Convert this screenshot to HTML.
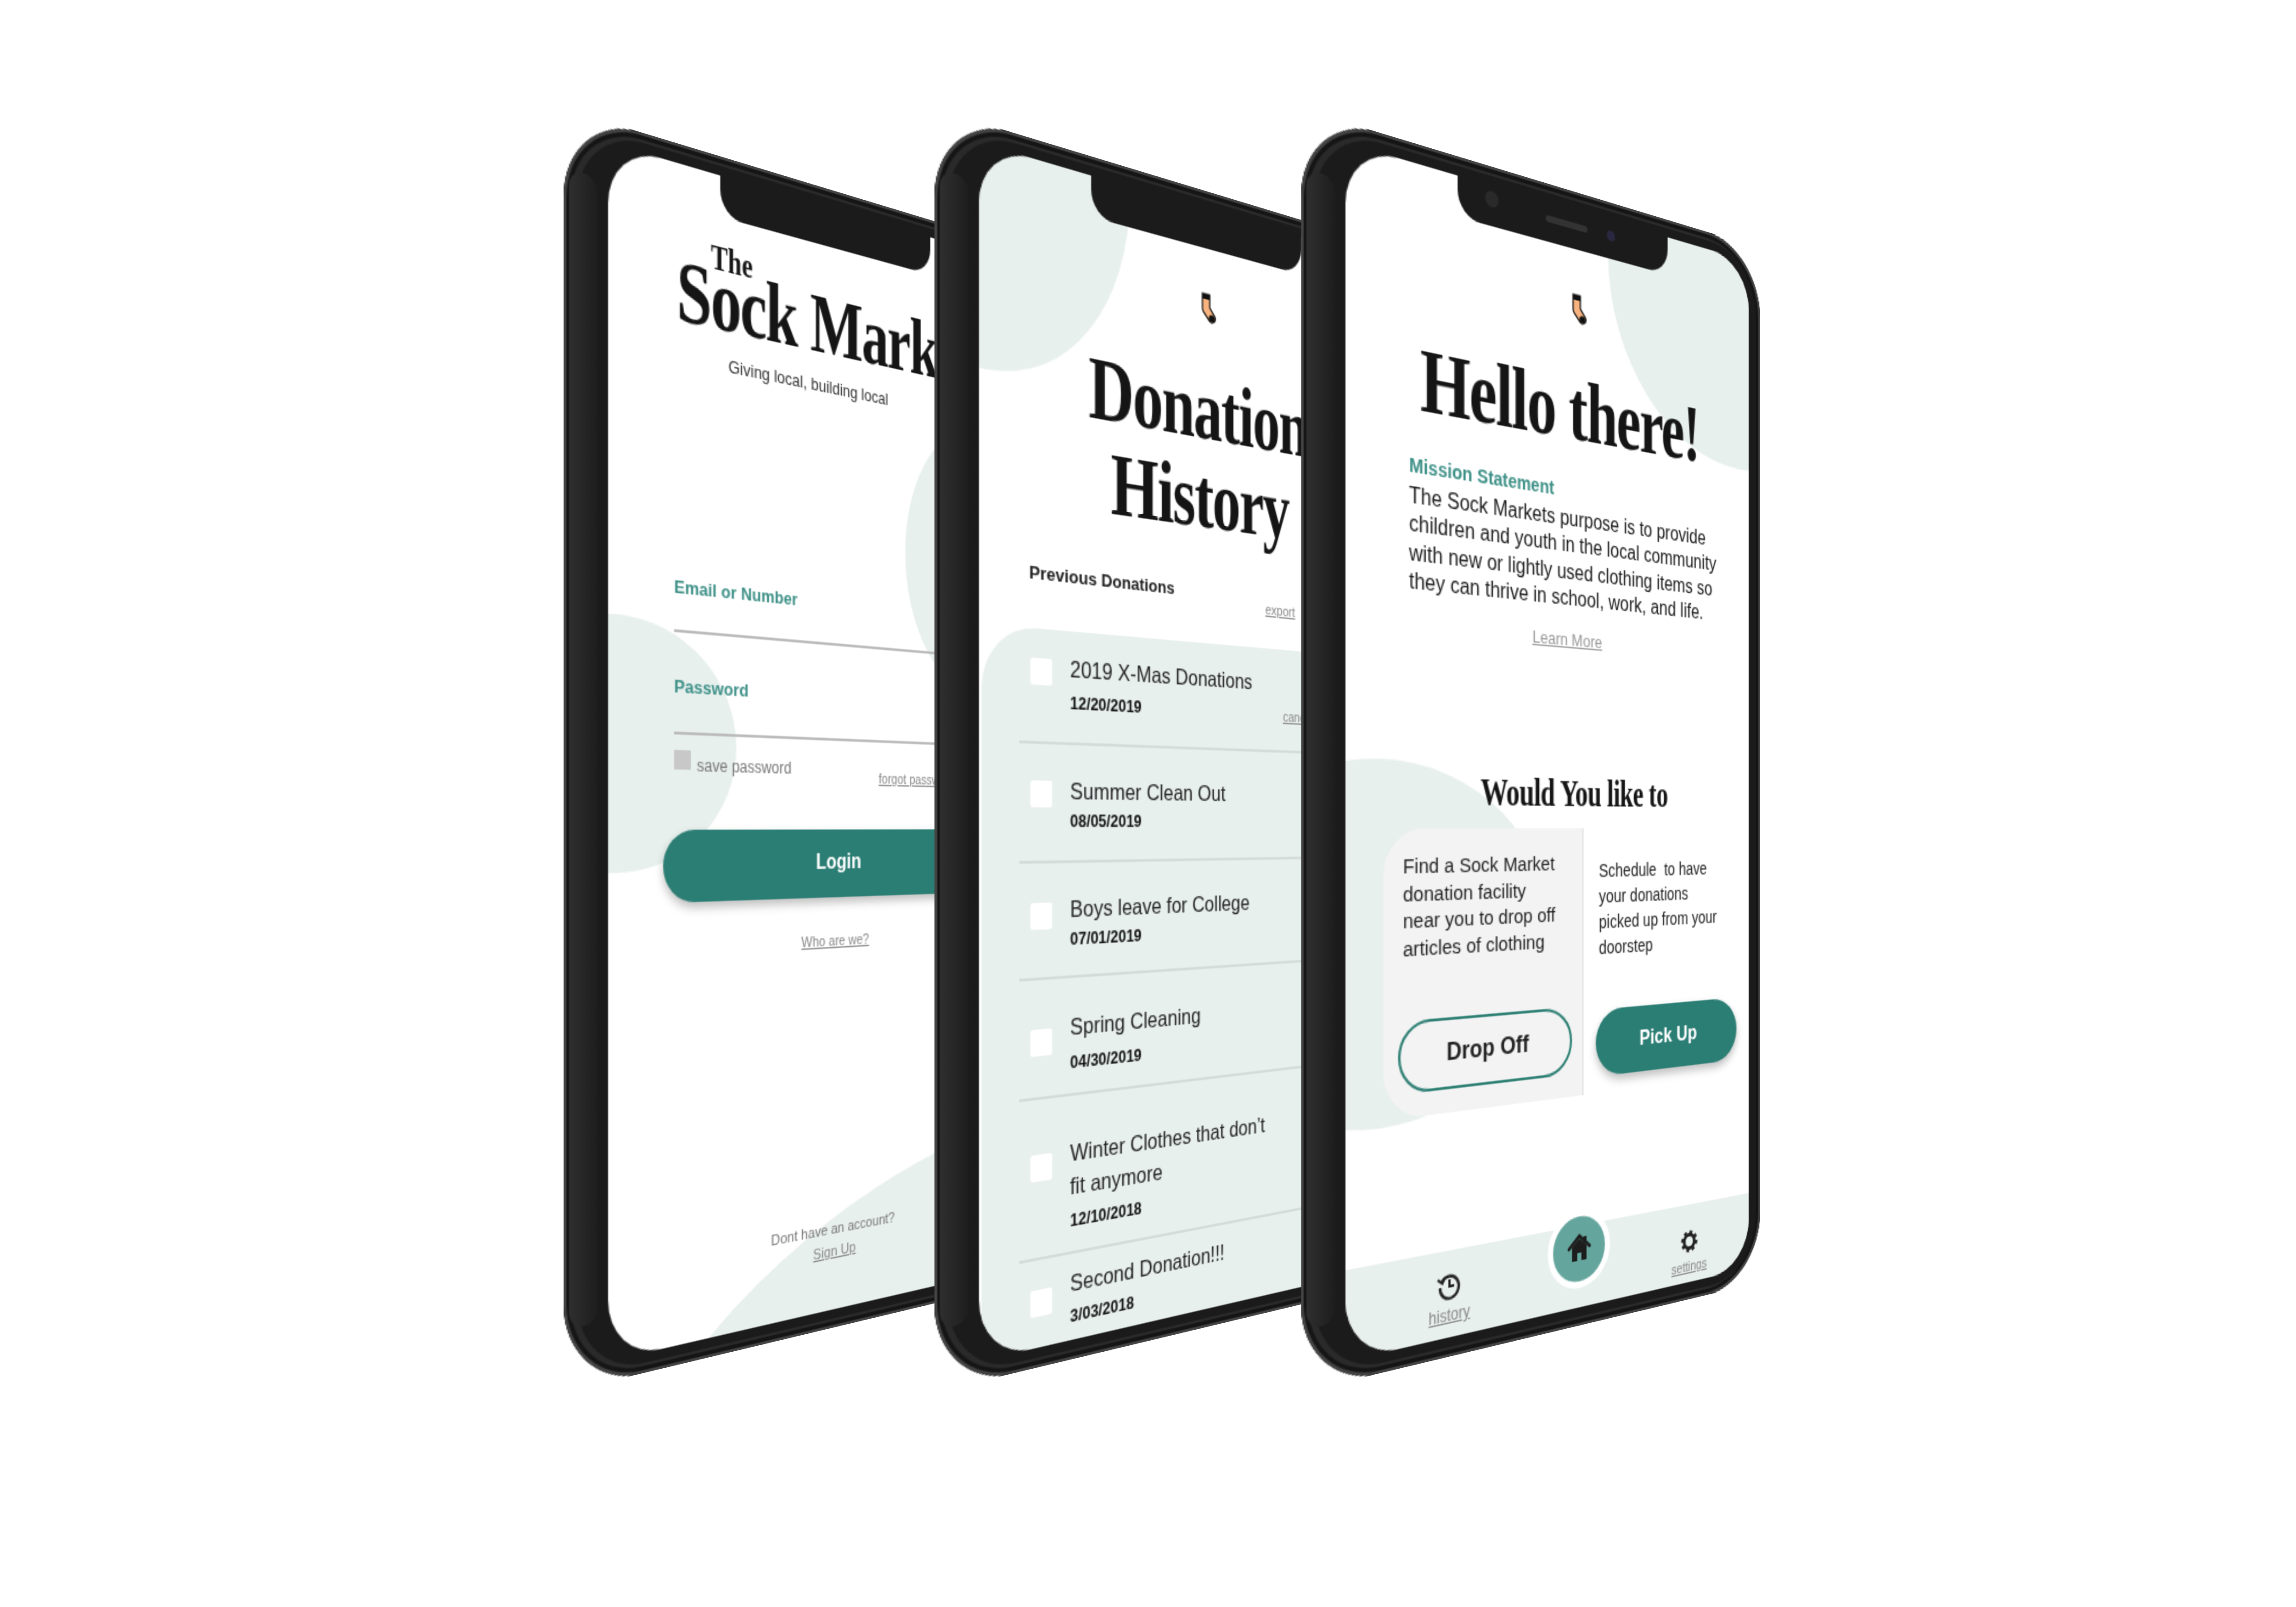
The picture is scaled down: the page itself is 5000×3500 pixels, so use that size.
<!DOCTYPE html>
<html><head><meta charset="utf-8"><style>
html,body{margin:0;padding:0;background:#fff;width:5000px;height:3500px;overflow:hidden}
#s{position:absolute;left:0;top:0;width:1560px;height:1092px;transform:scale(3.2051);transform-origin:0 0}
.pc{position:absolute;top:0;width:560px;height:1092px;perspective:760px;perspective-origin:0 561px}
.ph{position:absolute;left:0;top:74px;width:428px;height:872px;transform-origin:0 0;transform:rotateY(25.3deg);background:#1b1b1b;border-radius:60px;box-shadow:inset 0 0 0 2px #444,inset 0 0 0 5px #151515,inset 3px 0 0 7px #2a2a2a}
.side{position:absolute;left:4px;top:40px;width:22px;height:790px;border-radius:12px;background:linear-gradient(90deg,#2f2f2f,#1d1d1d)}
.sc{position:absolute;left:34px;top:14px;width:381px;height:844px;border-radius:42px;overflow:hidden;background:#fff}
.in{position:absolute;left:-34px;top:-14px;width:428px;height:868px}
.a{position:absolute;white-space:nowrap}
.bl{position:absolute;background:#e8f0ee;border-radius:50%}
.notch{position:absolute;left:126px;top:12px;width:200px;height:32px;background:#1b1b1b;border-radius:0 0 20px 20px}
.sf{font-family:"Liberation Serif",serif;font-weight:bold;color:#151515}
.ss{font-family:"Liberation Sans",sans-serif}
.t{color:#3e9188;font-weight:bold}
.g{color:#888;text-decoration:underline}
.cb{position:absolute;left:75px;width:18px;height:19px;background:#fff;border-radius:2px}
.ti{font-size:16.5px;color:#222;line-height:20px}
.dt{font-size:12.5px;font-weight:bold;color:#111;line-height:14px}
.dv{position:absolute;left:66px;width:380px;height:1.5px;background:#d3dcd9}
</style></head><body><div id="s">

<!-- PHONE 1 -->
<div class="pc" style="left:383px"><div class="ph"><div class="side"></div>
<div class="sc"><div class="in ss">
 <div class="bl" style="left:-60px;top:340px;width:200px;height:180px"></div>
 <div class="bl" style="left:300px;top:160px;width:160px;height:220px"></div>
 <div class="bl" style="left:40px;top:760px;width:560px;height:240px;transform:rotate(-20deg)"></div>
 <div class="a sf" style="left:118px;top:62px;font-size:26px;line-height:26px;transform:scaleX(.84);transform-origin:0 0">The</div>
 <div class="a sf" style="left:89px;top:73px;font-size:64px;line-height:64px;letter-spacing:-1.5px;transform:scaleX(.84);transform-origin:0 0">Sock Market</div>
 <div class="a" style="left:133px;top:145px;font-size:13px;line-height:13px;color:#333">Giving local, building local</div>
 <div class="a t" style="left:87px;top:308px;font-size:13.5px;line-height:18px">Email or Number</div>
 <div class="a" style="left:87px;top:347px;width:340px;height:1.5px;background:#bbb"></div>
 <div class="a t" style="left:87px;top:379px;font-size:13.5px;line-height:18px">Password</div>
 <div class="a" style="left:87px;top:420px;width:340px;height:1.5px;background:#bbb"></div>
 <div class="a" style="left:87px;top:433px;width:14px;height:14px;background:#c8c8c8"></div>
 <div class="a" style="left:106px;top:437px;font-size:12.5px;line-height:14px;color:#777">save password</div>
 <div class="a g" style="left:273px;top:445px;font-size:11px;line-height:13px">forgot password</div>
 <div class="a" style="left:78px;top:490px;width:312px;height:52px;border-radius:26px;background:#2b7e74;box-shadow:0 4px 7px rgba(0,0,0,.25);color:#fff;font-weight:bold;font-size:16px;line-height:52px;text-align:center">Login</div>
 <div class="a g" style="left:131px;width:200px;text-align:center;top:570px;font-size:11px;line-height:12px">Who are we?</div>
 <div class="a" style="left:130px;width:200px;text-align:center;top:791px;font-size:11.5px;line-height:12px;color:#777">Dont have an account?</div>
 <div class="a g" style="left:130px;width:200px;text-align:center;top:808px;font-size:11.5px;line-height:12px">Sign Up</div>
</div></div>
<div class="notch"></div>
</div></div>

<!-- PHONE 2 -->
<div class="pc" style="left:635px"><div class="ph"><div class="side"></div>
<div class="sc"><div class="in ss">
 <div class="bl" style="left:-80px;top:-130px;width:240px;height:300px"></div>
 <div class="bl" style="left:370px;top:120px;width:120px;height:220px"></div>
 <svg class="a" style="left:225px;top:78px" width="16" height="24" viewBox="0 0 16 24"><path d="M2 1h7v10l5 6a3.5 3.5 0 0 1-5 4.5L3 15Q2 14 2 12z" fill="#f7b27f" stroke="#111" stroke-width="1.2"/><rect x="2" y="1" width="7" height="4" fill="#111"/><circle cx="11" cy="19" r="2.8" fill="#111"/></svg>
 <div class="a sf" style="left:28px;width:400px;text-align:center;top:135px;font-size:66px;line-height:68px;letter-spacing:-1.5px;transform:scaleX(.84)">Donation<br>History</div>
 <div class="a" style="left:74px;top:299px;font-size:13.5px;line-height:18px;font-weight:bold;color:#222">Previous Donations</div>
 <div class="a g" style="left:289px;top:309px;font-size:11px;line-height:16px">export</div>
 <div class="a" style="left:36px;top:347px;width:420px;height:540px;background:#e8f0ee;border-radius:44px 0 0 0"></div>
 <div class="cb" style="top:368px"></div>
 <div class="a ti" style="left:108px;top:365px">2019 X-Mas Donations</div>
 <div class="a dt" style="left:108px;top:392px">12/20/2019</div>
 <div class="a g" style="left:307px;top:395px;font-size:11px;line-height:12px">cancel</div>
 <div class="dv" style="top:427px"></div>
 <div class="cb" style="top:455px"></div>
 <div class="a ti" style="left:108px;top:453px">Summer Clean Out</div>
 <div class="a dt" style="left:108px;top:477px">08/05/2019</div>
 <div class="dv" style="top:512px"></div>
 <div class="cb" style="top:542px"></div>
 <div class="a ti" style="left:108px;top:538px">Boys leave for College</div>
 <div class="a dt" style="left:108px;top:562px">07/01/2019</div>
 <div class="dv" style="top:595px"></div>
 <div class="cb" style="top:632px"></div>
 <div class="a ti" style="left:108px;top:623px">Spring Cleaning</div>
 <div class="a dt" style="left:108px;top:651px">04/30/2019</div>
 <div class="dv" style="top:680px"></div>
 <div class="cb" style="top:721px"></div>
 <div class="a ti" style="left:108px;top:713px;line-height:23.5px">Winter Clothes that don’t<br>fit anymore</div>
 <div class="a dt" style="left:108px;top:765px">12/10/2018</div>
 <div class="dv" style="top:794px"></div>
 <div class="cb" style="top:817px"></div>
 <div class="a ti" style="left:108px;top:808px">Second Donation!!!</div>
 <div class="a dt" style="left:108px;top:834px">3/03/2018</div>
</div></div>
<div class="notch"></div>
</div></div>

<!-- PHONE 3 -->
<div class="pc" style="left:884px"><div class="ph"><div class="side"></div>
<div class="sc"><div class="in ss">
 <div class="bl" style="left:265px;top:-110px;width:280px;height:300px"></div>
 <div class="bl" style="left:-90px;top:440px;width:300px;height:260px"></div>
 <svg class="a" style="left:229px;top:78px" width="16" height="24" viewBox="0 0 16 24"><path d="M2 1h7v10l5 6a3.5 3.5 0 0 1-5 4.5L3 15Q2 14 2 12z" fill="#f7b27f" stroke="#111" stroke-width="1.2"/><rect x="2" y="1" width="7" height="4" fill="#111"/><circle cx="11" cy="19" r="2.8" fill="#111"/></svg>
 <div class="a sf" style="left:27px;width:400px;text-align:center;top:136px;font-size:66px;line-height:66px;letter-spacing:-1.5px;transform:scaleX(.84)">Hello there!</div>
 <div class="a t" style="left:85px;top:222px;font-size:14.5px;line-height:18px">Mission Statement</div>
 <div class="a" style="left:85px;top:243px;font-size:16px;line-height:20.3px;color:#1a1a1a">The Sock Markets purpose is to provide<br>children and youth in the local community<br>with new or lightly used clothing items so<br>they can thrive in school, work, and life.</div>
 <div class="a g" style="left:126px;width:200px;text-align:center;top:338px;font-size:13px;line-height:14px;color:#999">Learn More</div>
 <div class="a sf" style="left:36px;width:400px;text-align:center;top:448px;font-size:30px;line-height:30px;letter-spacing:-.5px;transform:scaleX(.82)">Would You like to</div>
 <div class="a" style="left:64px;top:489px;width:176px;height:206px;background:#f3f3f3;border-radius:34px 0 0 34px;border-right:1.5px solid #ddd"></div>
 <div class="a" style="left:80px;top:507px;font-size:15.5px;line-height:19.5px;color:#222">Find a Sock Market<br>donation facility<br>near you to drop off<br>articles of clothing</div>
 <div class="a" style="left:256px;top:512px;font-size:14px;line-height:20px;color:#222">Schedule&nbsp; to have<br>your donations<br>picked up from your<br>doorstep</div>
 <div class="a" style="left:76px;top:626px;width:154px;height:52px;box-sizing:border-box;border:2.5px solid #2f8075;border-radius:26px;font-size:18px;font-weight:bold;color:#222;line-height:47px;text-align:center">Drop Off</div>
 <div class="a" style="left:253px;top:630px;width:148px;height:52px;border-radius:26px;background:#2b7e74;box-shadow:0 4px 7px rgba(0,0,0,.25);color:#fff;font-size:16.5px;font-weight:bold;line-height:52px;text-align:center">Pick Up</div>
 <div class="a" style="left:0;top:795px;width:428px;height:80px;background:#e8f0ee"></div>
 <div class="a" style="left:207px;top:783px;width:60px;height:60px;box-sizing:border-box;border:5px solid #fff;border-radius:50%;background:#64a69d"></div>
 <svg class="a" style="left:225px;top:801px" width="24" height="22" viewBox="0 0 24 22"><path d="M2 11 12 2l10 9" fill="none" stroke="#1d1d1d" stroke-width="2.6" stroke-linecap="round"/><path d="M5 10v11h5v-6h4v6h5V10L12 4z" fill="#1d1d1d"/><rect x="16" y="3" width="3" height="5" fill="#1d1d1d"/></svg>
 <svg class="a" style="left:108px;top:810px" width="22" height="22" viewBox="0 0 22 22"><path d="M4.5 7A8 8 0 1 1 3 11" fill="none" stroke="#222" stroke-width="2.2"/><path d="M1 5l4 3 2-4" fill="none" stroke="#222" stroke-width="2"/><path d="M11 6v5h4" fill="none" stroke="#222" stroke-width="2"/></svg>
 <div class="a g" style="left:89px;width:60px;text-align:center;top:836px;font-size:12px;line-height:13px;color:#888">history</div>
 <svg class="a" style="left:339px;top:815px" width="20" height="20" viewBox="0 0 20 20"><circle cx="10" cy="10" r="7" fill="none" stroke="#222" stroke-width="3.6" stroke-dasharray="2.8 2.7"/><circle cx="10" cy="10" r="5.4" fill="none" stroke="#222" stroke-width="3"/></svg>
 <div class="a g" style="left:319px;width:60px;text-align:center;top:840px;font-size:11px;line-height:12px;color:#888">settings</div>
</div></div>
<div class="notch"></div>
<div class="a" style="left:150px;top:18px;width:12px;height:12px;border-radius:50%;background:#2a2a2a"></div>
<div class="a" style="left:205px;top:24px;width:40px;height:5px;border-radius:3px;background:#333"></div>
<div class="a" style="left:264px;top:22px;width:8px;height:8px;border-radius:50%;background:#2a2840"></div>
</div></div>

</div></body></html>
